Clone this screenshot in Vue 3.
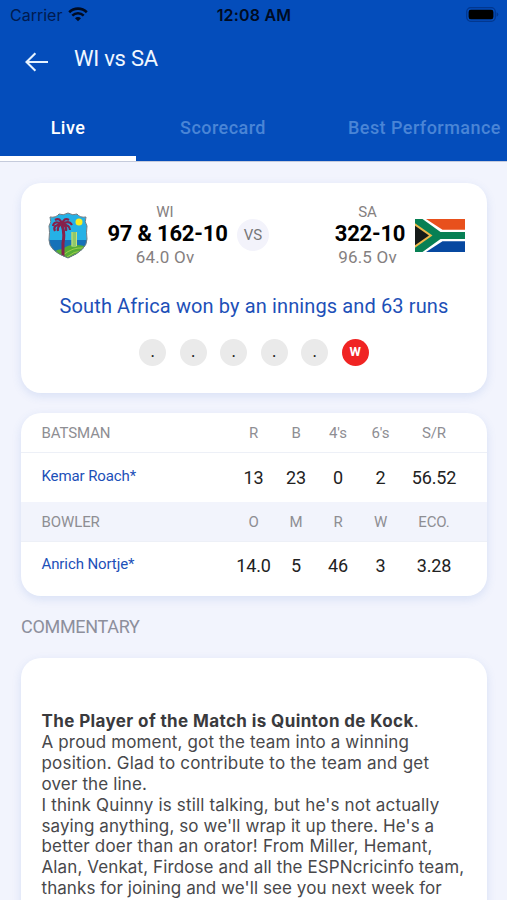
<script setup>
const tabs = ['Live', 'Scorecard', 'Best Performance']
const balls = ['.', '.', '.', '.', '.', 'W']
const batting = {
  head: ['BATSMAN', 'R', 'B', "4's", "6's", 'S/R'],
  row: ['Kemar Roach*', '13', '23', '0', '2', '56.52'],
}
const bowling = {
  head: ['BOWLER', 'O', 'M', 'R', 'W', 'ECO.'],
  row: ['Anrich Nortje*', '14.0', '5', '46', '3', '3.28'],
}
const commentary = [
  { text: 'A proud moment, got the team into a winning', tracking: 0.15 },
  { text: 'position. Glad to contribute to the team and get', tracking: 0.2 },
  { text: 'over the line.', tracking: 0.14 },
  { text: "I think Quinny is still talking, but he's not actually", tracking: 0.16 },
  { text: "saying anything, so we'll wrap it up there. He's a", tracking: 0.09 },
  { text: 'better doer than an orator! From Miller, Hemant,', tracking: 0.2 },
  { text: 'Alan, Venkat, Firdose and all the ESPNcricinfo team,', tracking: 0.11 },
  { text: "thanks for joining and we'll see you next week for", tracking: 0.07 },
]
</script>

<template>
  <div class="screen">
    <header class="header">
      <div class="status">
        <div class="carrier">
          <span>Carrier</span>
          <svg class="wifi" width="20" height="15" viewBox="0 0 20 15">
            <path d="M1.2 5.200a12.6 12.6 0 0 1 17.6 0" fill="none" stroke="#000b22" stroke-width="2.600" />
            <path d="M4.300 8.600a8.100 8.100 0 0 1 11.400 0" fill="none" stroke="#000b22" stroke-width="2.500" />
            <path d="M7 11.200a4.200 4.200 0 0 1 6 0L10 14.300z" fill="#000b22" />
          </svg>
        </div>
        <span class="time">12:08 AM</span>
        <svg class="battery" width="33" height="15" viewBox="0 0 33 15">
          <rect x="0.7" y="0.7" width="28.6" height="13.6" rx="4" fill="none" stroke="#02378f" stroke-width="1.2" />
          <rect x="2.6" y="2.8" width="24.8" height="9.4" rx="2.2" fill="#000" />
          <path d="M30.6 5.2q1.7.7 1.7 2.3t-1.7 2.3z" fill="#02378f" />
        </svg>
      </div>
      <div class="title-bar">
        <svg class="back" width="24" height="20" viewBox="0 0 24 20">
          <path d="M23 10H1.5M10.4 1.2L1.5 10l8.9 8.8" fill="none" stroke="#e6f3ff" stroke-width="2.1" />
        </svg>
        <h1>WI vs SA</h1>
      </div>
      <nav class="tabs">
        <span v-for="(tab, i) in tabs" :key="tab" class="tab" :class="{ active: i === 0 }">{{ tab }}</span>
      </nav>
    </header>

    <main class="content">
      <section class="card match">
        <div class="teams">
          <svg class="crest" width="40" height="47" viewBox="0 0 40 47">
            <defs>
              <clipPath id="shield">
                <path d="M2 5Q8 6 11 2q4 2 9-1 5 3 9 1 3 4 9 3-2 5 1 9-1 6 0 13 0 11-19 19Q1 39 1 28q1-8 0-14 3-4 1-9z" />
              </clipPath>
            </defs>
            <g clip-path="url(#shield)">
              <rect width="40" height="47" fill="#25b1e6" />
              <rect y="28" width="40" height="19" fill="#1671b8" />
              <path d="M5 40q5-3 10-3 6-5 14-4 5 0 10 2v12H5z" fill="#55ad36" />
              <path d="M15 43q10-8 20-7M19 45q7-6 15-6" stroke="#a1cd49" fill="none" />
              <path d="M23.500 20h5v15h-5z" fill="#8fc96b" />
              <path d="M24 20v14M28.500 20v14" stroke="#c9e07c" stroke-width="1" />
              <circle cx="31" cy="10" r="3.500" fill="#f9ed22" />
              <path d="M14 13q3 8 1 18l0 14" stroke="#86204b" stroke-width="3" fill="none" />
              <path d="M14 12Q6 8 5 14M14 12Q4 13 7 19M14 12Q9 14 10 19M14 12Q12 5 7 8M14 12Q16 5 21 8M14 12Q21 8 24 13M14 12Q22 13 22 18M14 12Q19 14 18 19" stroke="#86204b" stroke-width="2.200" fill="none" />
            </g>
            <path d="M2 5Q8 6 11 2q4 2 9-1 5 3 9 1 3 4 9 3-2 5 1 9-1 6 0 13 0 11-19 19Q1 39 1 28q1-8 0-14 3-4 1-9z" fill="none" stroke="#727b82" stroke-width="1" />
          </svg>
          <div class="team home">
            <span class="code">WI</span>
            <strong>97 &amp; 162-10</strong>
            <span class="overs">64.0 Ov</span>
          </div>
          <span class="versus">VS</span>
          <div class="team away">
            <span class="code">SA</span>
            <strong>322-10</strong>
            <span class="overs">96.5 Ov</span>
          </div>
          <svg class="flag" width="50" height="33" viewBox="0 0 50 34" preserveAspectRatio="none">
            <rect width="50" height="34" fill="#fff" />
            <path d="M11 0H50V11.200H27.500z" fill="#e8501c" />
            <path d="M11 34H50V22.800H27.500z" fill="#0748a0" />
            <path d="M0 0H7.500L25.500 13.500H50V20.500H25.500L7.500 34H0z" fill="#078054" />
            <path d="M0 4.500L17.500 17 0 29.500z" fill="#efba4b" />
            <path d="M0 7L14 17 0 27z" fill="#151b19" />
          </svg>
        </div>
        <p class="result">South Africa won by an innings and 63 runs</p>
        <div class="balls">
          <span v-for="(ball, i) in balls" :key="i" class="ball" :class="{ wicket: ball === 'W' }">{{ ball }}</span>
        </div>
      </section>

      <section class="card table">
        <div class="row head">
          <span v-for="cell in batting.head" :key="cell">{{ cell }}</span>
        </div>
        <div class="row data batting">
          <span v-for="cell in batting.row" :key="cell">{{ cell }}</span>
        </div>
        <div class="row head shaded">
          <span v-for="cell in bowling.head" :key="cell">{{ cell }}</span>
        </div>
        <div class="row data bowling">
          <span v-for="cell in bowling.row" :key="cell">{{ cell }}</span>
        </div>
      </section>

      <h2>COMMENTARY</h2>

      <section class="card commentary">
        <p class="lead"><b>The Player of the Match is Quinton de Kock</b>.</p>
        <p v-for="line in commentary" :key="line.text" :style="{ letterSpacing: line.tracking + 'px' }">{{ line.text }}</p>
      </section>
    </main>
  </div>
</template>

<style>
body {
  background: #f2f4fd;
}
</style>

<style scoped>
.screen {
  height: 900px;
  overflow: hidden;
  background: #f2f4fd;
  font-family: Roboto, sans-serif;
}
h1, h2, p {
  margin: 0;
  font-weight: 400;
}
.header {
  box-sizing: border-box;
  height: 162px;
  background: #044dbb;
  border-bottom: 1px solid #c5cbdc;
  display: flex;
  flex-direction: column;
}
.status {
  height: 30px;
  padding: 0 8px 0 10px;
  display: grid;
  grid-template-columns: 1fr auto 1fr;
  align-items: center;
  font-family: Inter, sans-serif;
  font-size: 16px;
  color: #001b50;
}
.carrier {
  display: flex;
  align-items: center;
  gap: 6px;
}
.wifi {
  margin-bottom: 2px;
}
.time {
  font-weight: 600;
  letter-spacing: 0.2px;
  margin-right: 1px;
  color: #000b22;
}
.battery {
  justify-self: end;
  margin-bottom: 2px;
}
.title-bar {
  height: 64px;
  padding-left: 25px;
  display: flex;
  align-items: center;
  gap: 25px;
}
h1 {
  font-size: 22px;
  line-height: 26px;
  letter-spacing: -0.25px;
  padding-bottom: 7px;
  color: #f0f7ff;
}
.tabs {
  height: 67px;
  display: flex;
}
.tab {
  box-sizing: border-box;
  width: 174px;
  flex: none;
  line-height: 68px;
  text-align: center;
  font-size: 18px;
  font-weight: 500;
  letter-spacing: 0.45px;
  color: #4a85d6;
}
.tab.active {
  width: 136px;
  color: #fff;
  border-bottom: 5px solid #fff;
}
.tab:last-child {
  width: 197px;
  padding-left: 38px;
  text-align: left;
  white-space: nowrap;
}
.content {
  padding: 21px 20px 0 21px;
}
.card {
  background: #fff;
  border-radius: 20px;
  box-shadow: 0 3px 10px rgba(70, 115, 200, 0.15);
}
.match {
  height: 209.500px;
}
.teams {
  height: 104px;
  padding: 0 22px 0 27px;
  display: flex;
  align-items: center;
}
.team {
  display: flex;
  flex-direction: column;
  align-items: center;
  white-space: nowrap;
  color: #858080;
}
.home {
  width: 121px;
  margin-left: 19px;
}
.away {
  width: 72px;
  margin-left: 65px;
  margin-right: 9px;
}
.code {
  margin-right: 5px;
  font-size: 15px;
  line-height: 20px;
}
.team strong {
  font-size: 22px;
  line-height: 23px;
  letter-spacing: -0.2px;
  color: #000;
}
.overs {
  margin-right: 5px;
  font-size: 17px;
  line-height: 24px;
  letter-spacing: 0.2px;
}
.versus {
  width: 32px;
  height: 32px;
  margin-left: 9px;
  border-radius: 50%;
  background: #f3f3fb;
  font-size: 15px;
  line-height: 32px;
  text-align: center;
  color: #777;
}
.crest, .flag {
  flex: none;
}
.flag {
  margin-top: 1px;
}
.result {
  height: 40px;
  line-height: 39px;
  font-size: 20px;
  letter-spacing: 0.12px;
  text-align: center;
  white-space: nowrap;
  color: #1d50b8;
}
.balls {
  display: flex;
  justify-content: center;
  gap: 13.500px;
  padding-top: 11.500px;
}
.ball {
  width: 27px;
  height: 27px;
  border-radius: 50%;
  background: #eaeaea;
  font-size: 14px;
  font-weight: 500;
  line-height: 26px;
  text-align: center;
  color: #222;
}
.ball.wicket {
  background: #f02423;
  color: #fff;
  font-size: 13px;
  font-weight: 700;
}
.table {
  height: 183px;
  margin-top: 20px;
  overflow: hidden;
}
.row {
  box-sizing: border-box;
  padding-left: 20.500px;
  display: grid;
  grid-template-columns: 190.500px 43px 42px 42px 43px 64px;
  align-items: center;
  text-align: center;
  white-space: nowrap;
}
.row span:first-child {
  text-align: left;
}
.head {
  height: 40px;
  padding-top: 2px;
  font-size: 15px;
  letter-spacing: -0.1px;
  color: #8e8e93;
  border-bottom: 1px solid #edf0f7;
}
.shaded {
  background: #f2f4fc;
}
.data {
  height: 49px;
  font-size: 18px;
  letter-spacing: -0.1px;
  color: #222;
}
.data span:first-child {
  font-size: 15px;
  padding-bottom: 3px;
  color: #1c50b8;
}
.bowling {
  height: 48px;
}
h2 {
  height: 62px;
  line-height: 62px;
  font-size: 18px;
  letter-spacing: -0.3px;
  color: #8d8f9c;
}
.commentary {
  height: 300px;
  padding: 53.500px 20px 0 20.500px;
  font-family: Inter, sans-serif;
  font-size: 17px;
  color: #48484b;
  white-space: nowrap;
}
.commentary p {
  line-height: 20.900px;
}
.commentary .lead {
  letter-spacing: 0.39px;
}
.commentary b {
  font-weight: 700;
  color: #3a3a3d;
}
</style>
